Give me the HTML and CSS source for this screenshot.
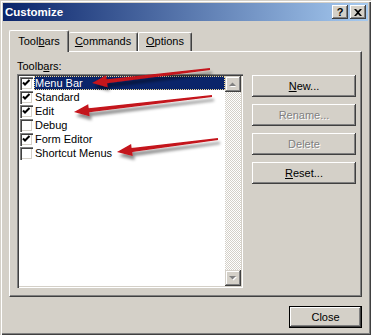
FILE: index.html
```html
<!DOCTYPE html>
<html lang="en">
<head>
  <meta charset="UTF-8">
  <meta name="viewport" content="width=device-width, initial-scale=1.0">
  <title>Customize</title>
  <link rel="stylesheet" href="styles.css">
</head>
<body>
  <div class="window">
    <div class="titlebar">
      <span class="title">Customize</span>
      <div class="caption-buttons">
        <span class="cap-btn help">?</span>
        <span class="cap-btn">
          <svg width="8" height="7" viewBox="0 0 8 7"><path d="M0 0h2l2 2 2-2h2L5 3.5 8 7H6L4 5 2 7H0l3-3.5z" fill="#000"/></svg>
        </span>
      </div>
    </div>

    <div class="content">
      <div class="tabs">
        <div class="tab active">Tool<u>b</u>ars</div>
        <div class="tab commands"><u>C</u>ommands</div>
        <div class="tab options"><u>O</u>ptions</div>
      </div>

      <div class="panel">
        <div class="list-col">
          <div class="label">Toolb<u>a</u>rs:</div>
          <div class="listbox">
            <div class="items">
              <div class="row selected">
                <span class="check on"><svg width="9" height="9" viewBox="0 0 9 9"><path d="M1 3.5 3 5.5 7.5 1" fill="none" stroke="#000" stroke-width="2"/></svg></span>
                <span class="name">Menu Bar</span>
              </div>
              <div class="row">
                <span class="check on"><svg width="9" height="9" viewBox="0 0 9 9"><path d="M1 3.5 3 5.5 7.5 1" fill="none" stroke="#000" stroke-width="2"/></svg></span>
                <span class="name">Standard</span>
              </div>
              <div class="row">
                <span class="check on"><svg width="9" height="9" viewBox="0 0 9 9"><path d="M1 3.5 3 5.5 7.5 1" fill="none" stroke="#000" stroke-width="2"/></svg></span>
                <span class="name">Edit</span>
              </div>
              <div class="row">
                <span class="check"></span>
                <span class="name">Debug</span>
              </div>
              <div class="row">
                <span class="check on"><svg width="9" height="9" viewBox="0 0 9 9"><path d="M1 3.5 3 5.5 7.5 1" fill="none" stroke="#000" stroke-width="2"/></svg></span>
                <span class="name">Form Editor</span>
              </div>
              <div class="row">
                <span class="check"></span>
                <span class="name">Shortcut Menus</span>
              </div>
            </div>
            <div class="scrollbar">
              <span class="sb-btn">
                <svg width="8" height="5" viewBox="0 0 8 5"><path d="M1 5 4 2 7 5z" fill="#fff"/><path d="M0 4 3.5 0.5 7 4z" fill="#808080"/></svg>
              </span>
              <span class="sb-btn">
                <svg width="8" height="5" viewBox="0 0 8 5"><path d="M1 1 4.5 4.5 8 1z" fill="#fff"/><path d="M0 0 3.5 3.5 7 0z" fill="#808080"/></svg>
              </span>
            </div>
          </div>
        </div>

        <div class="btn-col">
          <button class="btn"><u>N</u>ew...</button>
          <button class="btn disabled">Rename...</button>
          <button class="btn disabled">Delete</button>
          <button class="btn"><u>R</u>eset...</button>
        </div>
      </div>

      <div class="footer">
        <button class="btn default">Close</button>
      </div>
    </div>

    <!-- red callout arrows drawn over the dialog -->
    <svg class="arrows" width="371" height="335" viewBox="0 0 371 335">
      <defs>
        <filter id="shadow" x="-10%" y="-50%" width="130%" height="250%">
          <feDropShadow dx="2" dy="4" stdDeviation="1.6" flood-color="#000" flood-opacity="0.45"/>
        </filter>
      </defs>
      <g fill="#c4121a" filter="url(#shadow)">
        <polygon points="209.9,68 106.7,79.2 106.2,75.2 92,83 107.6,87.2 107.1,83.2 210.1,70"/>
        <polygon points="211.9,95 88.7,108.3 88.2,104.3 74,112 89.6,116.3 89.1,112.3 212.1,97"/>
        <polygon points="217.9,138 131.6,148.1 131.1,144.1 117,152 132.7,156.1 132.2,152.1 218.1,140"/>
      </g>
    </svg>
  </div>
</body>
</html>
```

FILE: styles.css
```css
body {
  margin: 0;
  font-family: "Liberation Sans", Arial, sans-serif;
  font-size: 11px;
  color: #000;
}
u {
  text-decoration: underline;
  text-underline-offset: 1px;
}
.window {
  position: relative;
  width: 371px;
  height: 335px;
  box-sizing: border-box;
  padding: 3px;
  background-color: #d4d0c8;
  box-shadow: inset 1px 1px #d4d0c8, inset 2px 2px #fff, inset -1px -1px #404040, inset -2px -2px #808080;
  overflow: hidden;
}
.titlebar {
  height: 18px;
  display: flex;
  align-items: center;
  justify-content: space-between;
  padding: 0 2px 0 2px;
  background: linear-gradient(to right, #0a246a, #a6caf0);
}
.title {
  color: #fff;
  font-weight: bold;
  font-size: 11.5px;
}
.caption-buttons {
  display: flex;
  gap: 2px;
}
.cap-btn {
  width: 16px;
  height: 14px;
  box-sizing: border-box;
  display: flex;
  align-items: center;
  justify-content: center;
  background-color: #d4d0c8;
  box-shadow: inset -1px -1px #404040, inset 1px 1px #fff, inset -2px -2px #808080;
}
.cap-btn.help {
  font-weight: bold;
  font-size: 11px;
  line-height: 14px;
}
.content {
  padding: 9px 3px 0 6px;
}
.tabs {
  display: flex;
  align-items: flex-end;
  height: 21px;
}
.tab {
  height: 19px;
  box-sizing: border-box;
  line-height: 17px;
  text-align: center;
  border-top: 1px solid #fff;
  border-left: 1px solid #fff;
  border-right: 1px solid #404040;
  border-radius: 2px 2px 0 0;
  box-shadow: inset -1px 0 #808080;
}
.tab.active {
  position: relative;
  z-index: 1;
  height: 22px;
  width: 60px;
  margin-bottom: -1px;
  line-height: 20px;
  background-color: #d4d0c8;
}
.tab.commands {
  width: 69px;
  border-left: none;
}
.tab.options {
  width: 54px;
}
.panel {
  display: flex;
  height: 246px;
  width: 353px;
  box-sizing: border-box;
  padding: 7px 4px 7px 7px;
  border-top: 1px solid #fff;
  border-left: 1px solid #fff;
  border-right: 1px solid #404040;
  border-bottom: 1px solid #404040;
  box-shadow: inset -1px -1px #808080;
}
.list-col {
  width: 226px;
}
.label {
  line-height: 14px;
  margin-bottom: 1px;
}
.listbox {
  display: flex;
  height: 214px;
  box-sizing: border-box;
  padding: 2px;
  background-color: #fff;
  box-shadow: inset 1px 1px #808080, inset 2px 2px #404040, inset -1px -1px #fff, inset -2px -2px #d4d0c8;
}
.items {
  flex: 1;
}
.row {
  display: flex;
  align-items: center;
  height: 14px;
}
.check {
  width: 13px;
  height: 13px;
  box-sizing: border-box;
  margin-left: 1px;
  display: flex;
  align-items: center;
  justify-content: center;
  background-color: #fff;
  box-shadow: inset 1px 1px #808080, inset 2px 2px #404040, inset -1px -1px #fff, inset -2px -2px #d4d0c8;
}
.name {
  flex: 1;
  margin-left: 1px;
  padding-left: 1px;
  line-height: 14px;
  height: 14px;
}
.row.selected .name {
  background-color: #0a246a;
  color: #fff;
  outline: 1px dotted #f0d890;
  outline-offset: -1px;
}
.scrollbar {
  width: 16px;
  display: flex;
  flex-direction: column;
  justify-content: space-between;
  background: repeating-conic-gradient(#d4d0c8 0 25%, #fff 0 50%) 0 0 / 2px 2px;
}
.sb-btn {
  width: 16px;
  height: 16px;
  box-sizing: border-box;
  display: flex;
  align-items: center;
  justify-content: center;
  background-color: #d4d0c8;
  box-shadow: inset -1px -1px #404040, inset 1px 1px #d4d0c8, inset -2px -2px #808080, inset 2px 2px #fff;
}
.btn-col {
  display: flex;
  flex-direction: column;
  gap: 7px;
  margin: 16px 0 0 9px;
}
.btn {
  width: 104px;
  height: 22px;
  padding: 0;
  border: none;
  font-family: inherit;
  font-size: 11px;
  color: #000;
  background-color: #d4d0c8;
  box-shadow: inset -1px -1px #404040, inset 1px 1px #fff, inset -2px -2px #808080, inset 2px 2px #d4d0c8;
}
.btn.disabled {
  color: #808080;
  text-shadow: 1px 1px #fff;
}
.footer {
  display: flex;
  justify-content: flex-end;
  margin-top: 9px;
  width: 353px;
}
.btn.default {
  width: 73px;
  box-shadow: inset 0 0 0 1px #000, inset -2px -2px #404040, inset 2px 2px #fff, inset -3px -3px #808080;
}
.arrows {
  position: absolute;
  left: 0;
  top: 0;
  pointer-events: none;
}
```
